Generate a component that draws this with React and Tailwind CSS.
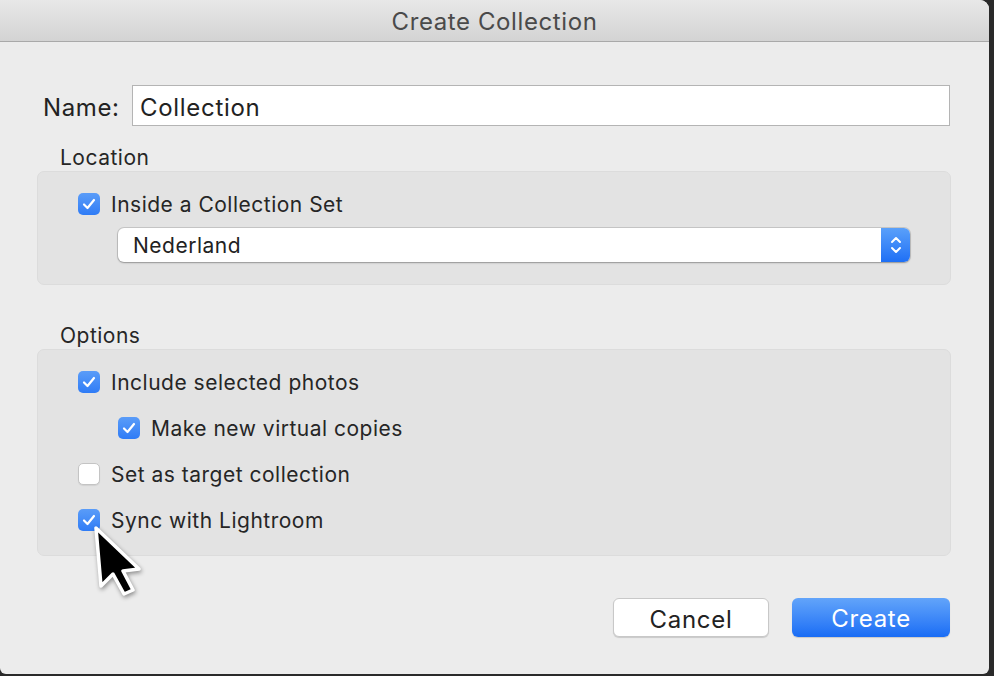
import { useState } from 'react';

const font = { fontFamily: 'Inter, "Liberation Sans", sans-serif' };

function Check({ checked, onClick }) {
  return (
    <button
      onClick={onClick}
      className={
        checked
          ? 'w-[22px] h-[22px] rounded-[5px] bg-gradient-to-b from-[#5a9cf8] to-[#2f7cf6] flex items-center justify-center shrink-0'
          : 'w-[22px] h-[22px] rounded-[5px] bg-white border border-[#c4c4c4] shadow-[0_1px_1px_rgba(0,0,0,0.08)] shrink-0'
      }
    >
      {checked && (
        <svg width="14" height="12" viewBox="0 0 14 12" fill="none">
          <path d="M2 6.5 L5.5 10 L12 2" stroke="white" strokeWidth="2.2" strokeLinecap="round" strokeLinejoin="round" />
        </svg>
      )}
    </button>
  );
}

function Row({ checked, onToggle, label, indent }) {
  return (
    <div className={indent ? 'flex items-center h-[22px] pl-[80px]' : 'flex items-center h-[22px] pl-[40px]'}>
      <Check checked={checked} onClick={onToggle} />
      <span className="ml-[11px] mt-[2px] text-[21px] text-[#262626] tracking-[0.5px]">{label}</span>
    </div>
  );
}

export default function App() {
  const [opts, setOpts] = useState({ inside: true, include: true, virtual: true, target: false, sync: true });
  const toggle = (k) => setOpts({ ...opts, [k]: !opts[k] });

  return (
    <div className="relative w-[994px] h-[676px] bg-[#2a2a2a] overflow-hidden" style={font}>
      <div className="w-[989px] h-[674px] bg-[#ececec] rounded-tr-[9px] rounded-b-[6px] flex flex-col overflow-hidden">
        {/* Title bar */}
        <div className="h-[42px] shrink-0 bg-gradient-to-b from-[#e8e8e8] to-[#d3d3d3] border-b border-[#a9a9a9] flex items-center justify-center">
          <span className="text-[24px] text-[#4a4a4a] tracking-[0.6px] mt-[2px]">Create Collection</span>
        </div>

        {/* Name */}
        <div className="mt-[43px] pl-[43px] flex items-center">
          <span className="w-[89px] pt-[4px] text-[24px] text-[#222] tracking-[0.6px]">Name:</span>
          <input
            defaultValue="Collection"
            className="w-[818px] h-[41px] bg-white border border-[#b4b4b4] px-[7px] pt-[4px] text-[24px] text-[#222] tracking-[0.7px] outline-none"
          />
        </div>

        {/* Location */}
        <div className="mt-[19px] pl-[60px] text-[21px] leading-[24px] text-[#262626] tracking-[0.5px] pt-[1px]">Location</div>
        <div className="mt-[1px] ml-[37px] w-[914px] h-[114px] bg-[#e3e3e3] border border-[#dcdcdc] rounded-[7px] pt-[21px]">
          <Row checked={opts.inside} onToggle={() => toggle('inside')} label="Inside a Collection Set" />
          <div className="mt-[13px] ml-[80px] w-[792px] h-[34px] flex bg-white rounded-[6px] shadow-[0_0_0_1px_rgba(0,0,0,0.12),0_1px_2px_rgba(0,0,0,0.25)]">
            <div className="flex-1 flex items-center pl-[15px] pt-[2px] text-[21px] text-[#222] tracking-[0.5px]">Nederland</div>
            <div className="w-[29px] h-full rounded-r-[6px] bg-gradient-to-b from-[#5aa0fa] to-[#1e6ff5] flex items-center justify-center">
              <svg width="14" height="22" viewBox="0 0 14 22" fill="none">
                <path d="M3 8 L7 4 L11 8" stroke="white" strokeWidth="2" strokeLinecap="round" strokeLinejoin="round" />
                <path d="M3 14 L7 18 L11 14" stroke="white" strokeWidth="2" strokeLinecap="round" strokeLinejoin="round" />
              </svg>
            </div>
          </div>
        </div>

        {/* Options */}
        <div className="mt-[38px] pl-[60px] text-[21px] leading-[24px] text-[#262626] tracking-[0.5px] pt-[1px]">Options</div>
        <div className="mt-[1px] ml-[37px] w-[914px] h-[207px] bg-[#e3e3e3] border border-[#dcdcdc] rounded-[7px] pt-[21px] flex flex-col gap-[24px]">
          <Row checked={opts.include} onToggle={() => toggle('include')} label="Include selected photos" />
          <Row checked={opts.virtual} onToggle={() => toggle('virtual')} label="Make new virtual copies" indent />
          <Row checked={opts.target} onToggle={() => toggle('target')} label="Set as target collection" />
          <Row checked={opts.sync} onToggle={() => toggle('sync')} label="Sync with Lightroom" />
        </div>

        {/* Buttons */}
        <div className="mt-[42px] pr-[39px] flex justify-end gap-[23px]">
          <button className="w-[156px] h-[39px] bg-white rounded-[6px] border border-[#c8c8c8] shadow-[0_1px_1px_rgba(0,0,0,0.15)] text-[24px] text-[#222] tracking-[0.7px] pt-[3px]">
            Cancel
          </button>
          <button className="w-[158px] h-[39px] rounded-[6px] bg-gradient-to-b from-[#62a4fa] to-[#186cf5] shadow-[0_1px_1px_rgba(0,0,0,0.15)] text-[24px] text-white tracking-[0.7px] pt-[3px]">
            Create
          </button>
        </div>
      </div>

      {/* Mouse cursor */}
      <svg className="absolute left-[91px] top-[524px] drop-shadow-[1px_2px_2px_rgba(0,0,0,0.4)]" width="52" height="74" viewBox="0 0 52 74">
        <polygon
          points="5,4 10,62 22,50 33,70 42,66 32,47 48,45"
          fill="black"
          stroke="white"
          strokeWidth="3.5"
          strokeLinejoin="round"
        />
      </svg>
    </div>
  );
}
